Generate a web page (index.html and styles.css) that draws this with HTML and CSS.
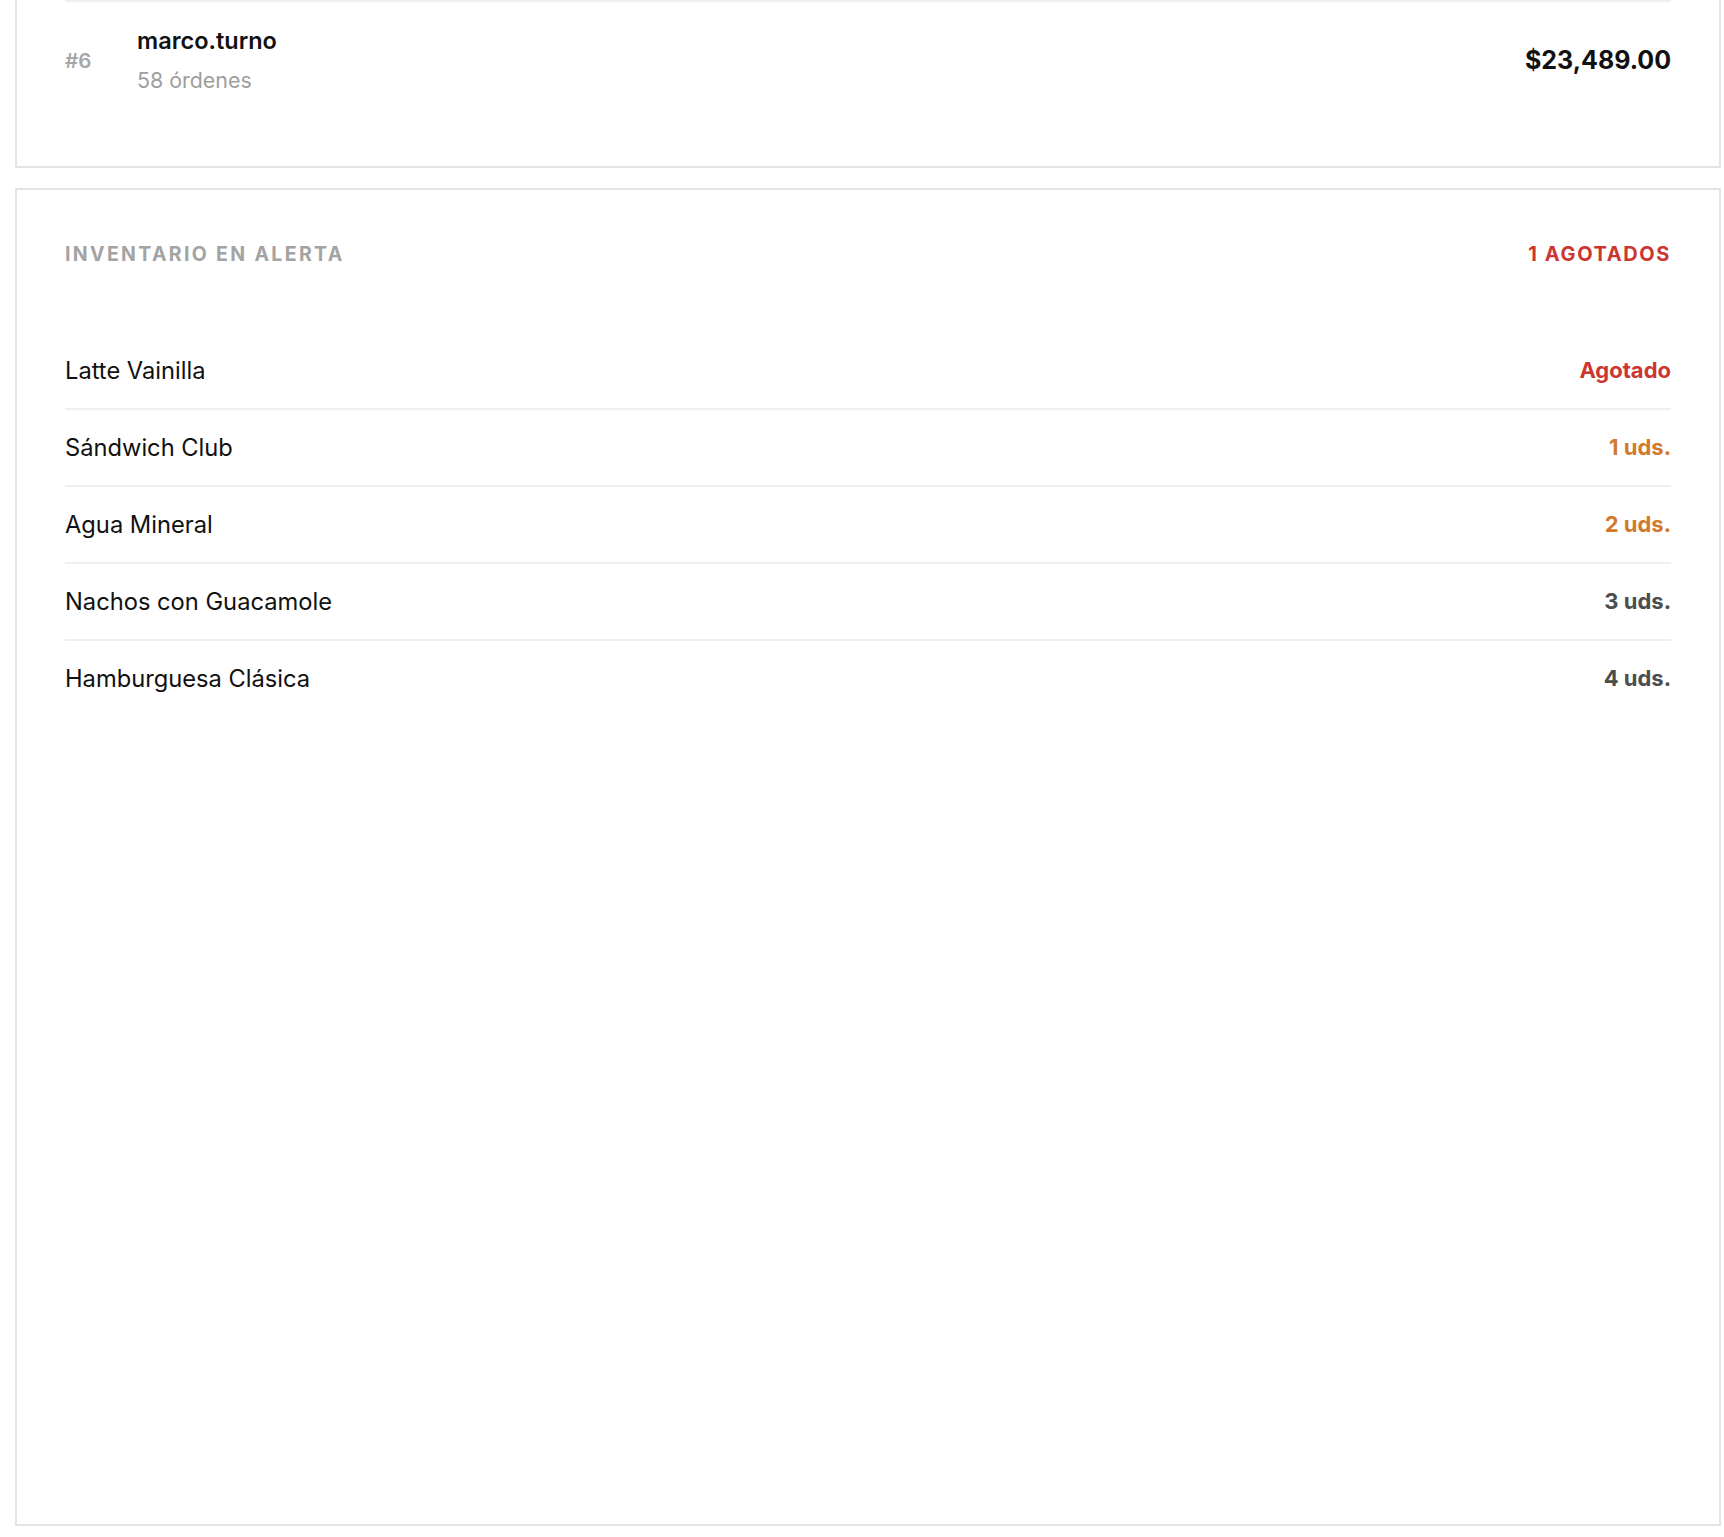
FILE: index.html
```html
<!DOCTYPE html>
<html lang="es">
  <head>
    <meta charset="UTF-8" />
    <meta name="viewport" content="width=device-width, initial-scale=1" />
    <title>Panel - Inventario</title>
    <link rel="stylesheet" href="styles.css">
  </head>
  <body>
    <!-- Ranking de meseros (continúa desde arriba) -->
    <section class="card card-cut">
      <div class="rank-row">
        <span class="rank">#6</span>
        <div class="rank-info">
          <div class="rank-name">marco.turno</div>
          <div class="rank-sub">58 órdenes</div>
        </div>
        <span class="rank-amount">$23,489.00</span>
      </div>
    </section>

    <!-- Inventario en alerta -->
    <section class="card card-fill">
      <div class="card-header">
        <h2>Inventario en alerta</h2>
        <span class="badge-out">1 agotados</span>
      </div>
      <ul class="stock-list">
        <li class="stock-row">
          <span class="stock-name">Latte Vainilla</span>
          <span class="stock-qty out">Agotado</span>
        </li>
        <li class="stock-row">
          <span class="stock-name">Sándwich Club</span>
          <span class="stock-qty low">1 uds.</span>
        </li>
        <li class="stock-row">
          <span class="stock-name">Agua Mineral</span>
          <span class="stock-qty low">2 uds.</span>
        </li>
        <li class="stock-row">
          <span class="stock-name">Nachos con Guacamole</span>
          <span class="stock-qty">3 uds.</span>
        </li>
        <li class="stock-row">
          <span class="stock-name">Hamburguesa Clásica</span>
          <span class="stock-qty">4 uds.</span>
        </li>
      </ul>
    </section>
  </body>
</html>
```

FILE: styles.css
```css
/* Reset and basic styles */
* {
  margin: 0;
  padding: 0;
  box-sizing: border-box;
}
body {
  font-family: Inter, "Noto Sans", sans-serif;
  background: #fff;
  color: #111;
  display: flex;
  flex-direction: column;
  gap: 20px;
  height: 100vh;
  padding: 0 3px 11px 15px;
}
.card {
  background: #fff;
  border: 2px solid #e4e4e4;
  padding: 48px;
}
.card-cut {
  border-top: none;
  padding-top: 0;
}
.card-fill {
  flex: 1;
}

/* Ranking */
.rank-row {
  display: flex;
  align-items: center;
  border-top: 2px solid #efefef;
  padding: 24px 0;
}
.rank {
  width: 72px;
  font-size: 20.5px;
  font-weight: 600;
  color: #a6a6a6;
}
.rank-name {
  font-size: 23.5px;
  line-height: 30px;
  font-weight: 600;
}
.rank-sub {
  margin-top: 10px;
  font-size: 21.4px;
  line-height: 28px;
  color: #9e9e9e;
}
.rank-amount {
  margin-left: auto;
  font-size: 25px;
  font-weight: 700;
}

/* Inventario */
.card-header {
  display: flex;
  justify-content: space-between;
  align-items: center;
  height: 32px;
  margin-bottom: 63px;
}
.card-header h2 {
  font-size: 19.5px;
  font-weight: 700;
  letter-spacing: 0.12em;
  text-transform: uppercase;
  color: #a3a3a3;
}
.badge-out {
  font-size: 20px;
  font-weight: 700;
  letter-spacing: 0.08em;
  text-transform: uppercase;
  color: #cc3631;
}
.stock-list {
  list-style: none;
}
.stock-row {
  display: flex;
  justify-content: space-between;
  align-items: center;
  padding: 20px 0;
  line-height: 35px;
  border-bottom: 2px solid #efefef;
}
.stock-row:last-child {
  border-bottom: none;
}
.stock-name {
  font-size: 23.7px;
}
.stock-qty {
  font-size: 22px;
  font-weight: 700;
  color: #4d4d4d;
}
.stock-qty.out {
  color: #cc3631;
}
.stock-qty.low {
  color: #d27a2c;
}
```
